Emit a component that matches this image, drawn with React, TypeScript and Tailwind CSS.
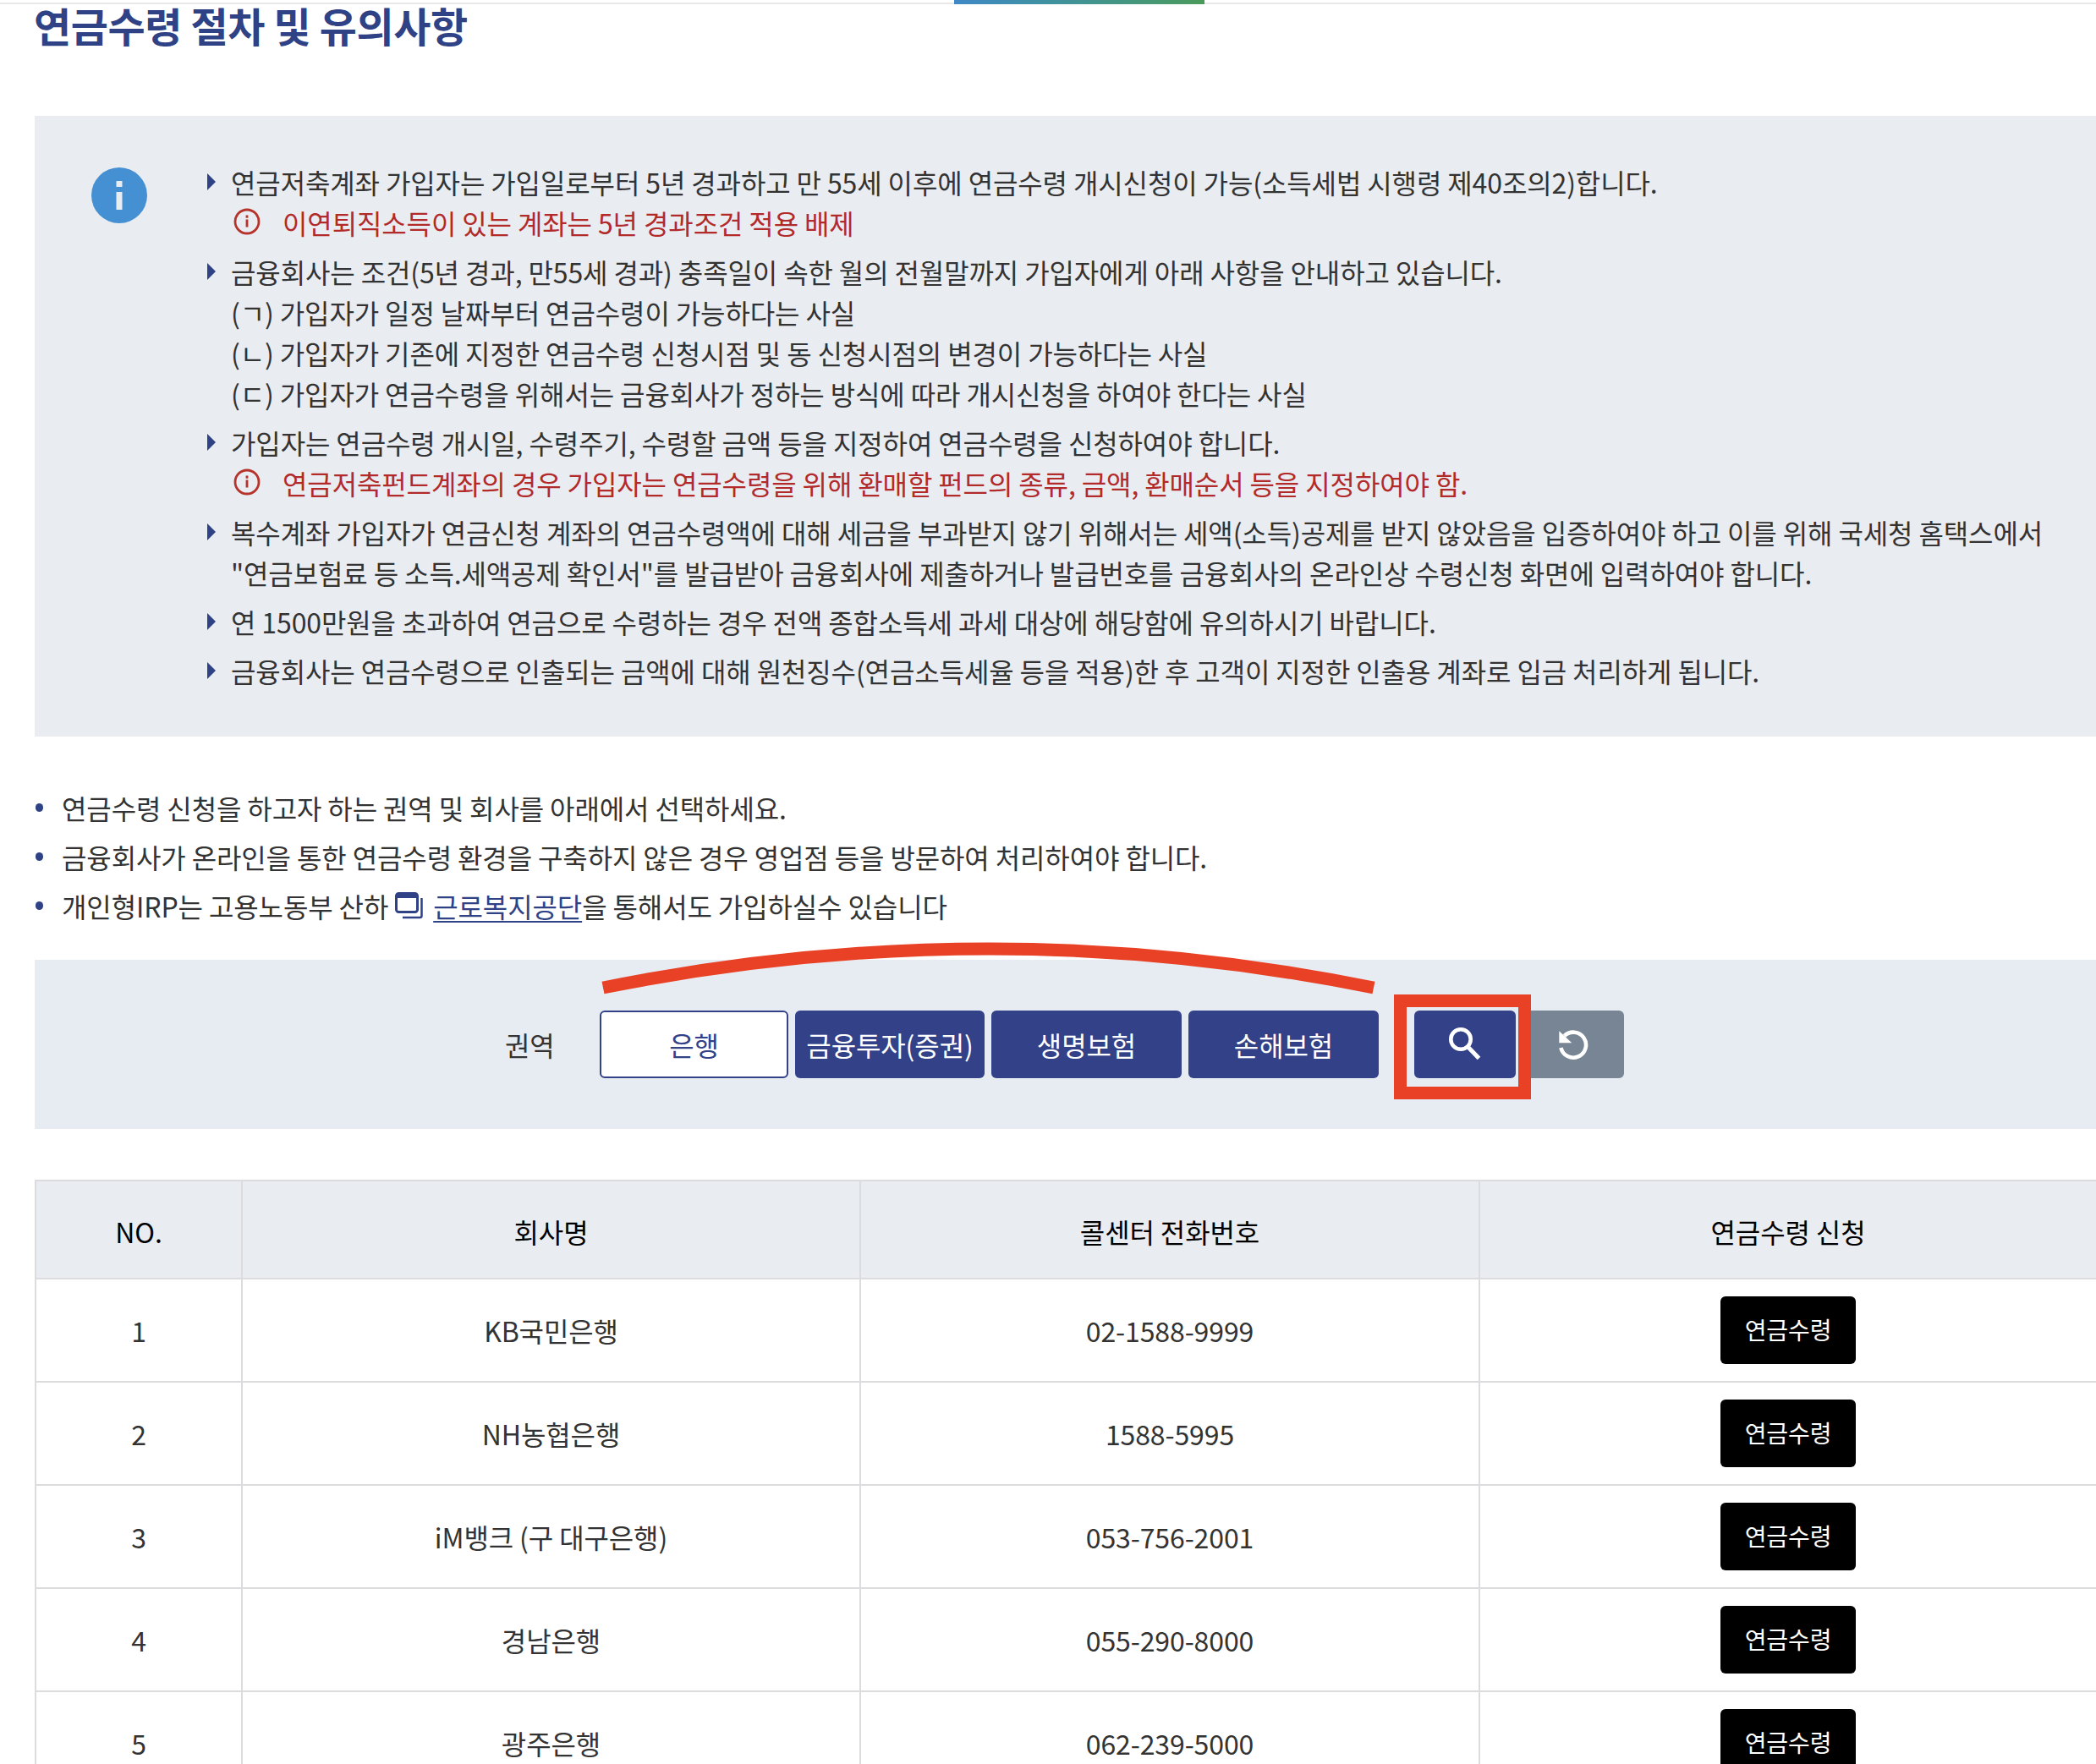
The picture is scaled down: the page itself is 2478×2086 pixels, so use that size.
const font = { fontFamily: '"Noto Sans CJK KR", "Noto Sans", sans-serif' };

const rows = [
  { no: 1, name: "KB국민은행", tel: "02-1588-9999" },
  { no: 2, name: "NH농협은행", tel: "1588-5995" },
  { no: 3, name: "iM뱅크 (구 대구은행)", tel: "053-756-2001" },
  { no: 4, name: "경남은행", tel: "055-290-8000" },
  { no: 5, name: "광주은행", tel: "062-239-5000" },
];

function Arrow() {
  return <span className="absolute left-[-28px] top-[14px] h-0 w-0 border-y-[10px] border-l-[10px] border-y-transparent border-l-[#2f4286]" />;
}

function RedNote({ children }: { children: string }) {
  return (
    <p className="flex items-center text-[#b22a2a]">
      <svg width="32" height="32" viewBox="0 0 32 32" className="-mt-[3px] ml-[3px] mr-[26px] shrink-0">
        <circle cx="16" cy="16" r="14" fill="none" stroke="#b5332b" strokeWidth="2.8" />
        <rect x="14.6" y="13.5" width="2.8" height="9" fill="#b5332b" />
        <rect x="14.6" y="8.5" width="2.8" height="3.2" fill="#b5332b" />
      </svg>
      {children}
    </p>
  );
}

export default function App() {
  return (
    <div style={font} className="relative h-[2086px] w-[2478px] overflow-hidden bg-white text-[32px] leading-[48px] tracking-[-0.12px] text-[#333]">
      {/* top tab line */}
      <div className="h-[5px] border-b-2 border-[#e8e8e8]">
        <div className="ml-[1128px] h-[5px] w-[296px] bg-gradient-to-r from-[#3f88c5] to-[#4a9a5a]" />
      </div>

      <h2 className="pl-[40px] text-[48px] leading-[48px] font-bold tracking-[-0.4px] text-[#2f4286]">연금수령 절차 및 유의사항</h2>

      {/* notice */}
      <div className="mt-[84px] ml-[41px] flex bg-[#e9ecf1] pt-[54px] pb-[54px]">
        <div className="mt-[7px] ml-[67px] flex h-[66px] w-[66px] shrink-0 items-center justify-center rounded-full bg-[#4590d2]">
          <svg width="8" height="34" viewBox="0 0 8 34">
            <rect x="0.5" y="0" width="7" height="7" fill="#e9ecf1" />
            <rect x="0.5" y="13" width="7" height="21" fill="#e9ecf1" />
          </svg>
        </div>
        <div className="ml-[99px] flex flex-col gap-[10px] whitespace-nowrap">
          <div className="relative">
            <Arrow />
            <p>연금저축계좌 가입자는 가입일로부터 5년 경과하고 만 55세 이후에 연금수령 개시신청이 가능(소득세법 시행령 제40조의2)합니다.</p>
            <RedNote>이연퇴직소득이 있는 계좌는 5년 경과조건 적용 배제</RedNote>
          </div>
          <div className="relative">
            <Arrow />
            <p>금융회사는 조건(5년 경과, 만55세 경과) 충족일이 속한 월의 전월말까지 가입자에게 아래 사항을 안내하고 있습니다.</p>
            <p>(ㄱ) 가입자가 일정 날짜부터 연금수령이 가능하다는 사실</p>
            <p>(ㄴ) 가입자가 기존에 지정한 연금수령 신청시점 및 동 신청시점의 변경이 가능하다는 사실</p>
            <p>(ㄷ) 가입자가 연금수령을 위해서는 금융회사가 정하는 방식에 따라 개시신청을 하여야 한다는 사실</p>
          </div>
          <div className="relative">
            <Arrow />
            <p>가입자는 연금수령 개시일, 수령주기, 수령할 금액 등을 지정하여 연금수령을 신청하여야 합니다.</p>
            <RedNote>연금저축펀드계좌의 경우 가입자는 연금수령을 위해 환매할 펀드의 종류, 금액, 환매순서 등을 지정하여야 함.</RedNote>
          </div>
          <div className="relative">
            <Arrow />
            <p>복수계좌 가입자가 연금신청 계좌의 연금수령액에 대해 세금을 부과받지 않기 위해서는 세액(소득)공제를 받지 않았음을 입증하여야 하고 이를 위해 국세청 홈택스에서</p>
            <p>"연금보험료 등 소득.세액공제 확인서"를 발급받아 금융회사에 제출하거나 발급번호를 금융회사의 온라인상 수령신청 화면에 입력하여야 합니다.</p>
          </div>
          <div className="relative">
            <Arrow />
            <p>연 1500만원을 초과하여 연금으로 수령하는 경우 전액 종합소득세 과세 대상에 해당함에 유의하시기 바랍니다.</p>
          </div>
          <div className="relative">
            <Arrow />
            <p>금융회사는 연금수령으로 인출되는 금액에 대해 원천징수(연금소득세율 등을 적용)한 후 고객이 지정한 인출용 계좌로 입금 처리하게 됩니다.</p>
          </div>
        </div>
      </div>

      {/* guide list */}
      <ul className="mt-[60px] flex flex-col gap-[10px] whitespace-nowrap">
        <li className="flex items-center">
          <span className="mr-[22px] ml-[42px] h-[10px] w-[9px] rounded-full bg-[#2f4286]" />
          연금수령 신청을 하고자 하는 권역 및 회사를 아래에서 선택하세요.
        </li>
        <li className="flex items-center">
          <span className="mr-[22px] ml-[42px] h-[10px] w-[9px] rounded-full bg-[#2f4286]" />
          금융회사가 온라인을 통한 연금수령 환경을 구축하지 않은 경우 영업점 등을 방문하여 처리하여야 합니다.
        </li>
        <li className="flex items-center">
          <span className="mr-[22px] ml-[42px] h-[10px] w-[9px] rounded-full bg-[#2f4286]" />
          개인형IRP는 고용노동부 산하
          <svg width="33" height="32" viewBox="0 0 33 32" className="mr-[12px] ml-[8px] shrink-0">
            <rect x="1.5" y="1.5" width="25" height="22" rx="3" fill="none" stroke="#2f4286" strokeWidth="3" />
            <path d="M1.5 4.5A3 3 0 0 1 4.5 1.5H23.5A3 3 0 0 1 26.5 4.5V7H1.5Z" fill="#2f4286" />
            <path d="M31.5 7V28A2 2 0 0 1 29.5 30H9" fill="none" stroke="#2f4286" strokeWidth="2.5" />
          </svg>
          <span className="text-[#2f4286] underline decoration-2 underline-offset-4">근로복지공단</span>을 통해서도 가입하실수 있습니다
        </li>
      </ul>

      {/* filter */}
      <div className="mt-[40px] ml-[41px] flex h-[200px] items-start bg-[#e7ecf3] pt-[60px]">
        <span className="ml-[556px] w-[112px] text-[#333] leading-[80px]">권역</span>
        <div className="flex gap-[8px]">
          <button className="h-[80px] w-[223px] rounded-[6px] border-2 border-[#324188] bg-white text-[#324188]">은행</button>
          <button className="h-[80px] w-[224px] rounded-[6px] bg-[#324188] text-white">금융투자(증권)</button>
          <button className="h-[80px] w-[225px] rounded-[6px] bg-[#324188] text-white">생명보험</button>
          <button className="h-[80px] w-[225px] rounded-[6px] bg-[#324188] text-white">손해보험</button>
        </div>
        <div className="ml-[42px] flex gap-[8px]">
          <button className="flex h-[80px] w-[120px] items-center justify-center rounded-[6px] bg-[#324188]">
            <svg width="40" height="40" viewBox="0 0 40 40">
              <circle cx="15" cy="14" r="11.7" fill="none" stroke="#fff" strokeWidth="4.6" />
              <path d="M23 22.5L36.5 36.5" fill="none" stroke="#fff" strokeWidth="5" />
            </svg>
          </button>
          <button className="flex h-[80px] w-[120px] items-center justify-center rounded-[6px] bg-[#788594]">
            <svg width="38" height="38" viewBox="0 0 38 38">
              <path d="M8.5 9A15 15 0 1 1 4.4 23" fill="none" stroke="#fff" strokeWidth="4.6" />
              <path d="M2.3 3.3V17.3H17.3Z" fill="#fff" />
            </svg>
          </button>
        </div>
      </div>

      {/* company table */}
      <table className="mt-[60px] ml-[41px] w-[2437px] table-fixed border-collapse text-center">
        <colgroup>
          <col className="w-[244px]" />
          <col className="w-[731px]" />
          <col className="w-[732px]" />
          <col className="w-[730px]" />
        </colgroup>
        <thead>
          <tr className="h-[116px] bg-[#e9ecf1] text-black">
            <th className="border-2 border-[#dcdcdf] pt-[4px] font-normal">NO.</th>
            <th className="border-2 border-[#dcdcdf] pt-[4px] font-normal">회사명</th>
            <th className="border-2 border-[#dcdcdf] pt-[4px] font-normal">콜센터 전화번호</th>
            <th className="border-2 border-[#dcdcdf] pt-[4px] font-normal">연금수령 신청</th>
          </tr>
        </thead>
        <tbody>
          {rows.map((r) => (
            <tr key={r.no} className="h-[122px]">
              <td className="border-2 border-[#dcdcdf]">{r.no}</td>
              <td className="border-2 border-[#dcdcdf]">{r.name}</td>
              <td className="border-2 border-[#dcdcdf]">{r.tel}</td>
              <td className="border-2 border-[#dcdcdf]">
                <button className="h-[80px] w-[160px] rounded-[6px] bg-black pb-[2px] align-middle text-[28px] text-white">연금수령</button>
              </td>
            </tr>
          ))}
        </tbody>
      </table>

      {/* red annotation drawn over the page */}
      <svg className="pointer-events-none absolute top-0 left-0" width="2478" height="2086">
        <path d="M713 1168Q1170 1076 1624 1168" fill="none" stroke="#e94125" strokeWidth="15" />
      </svg>
      <div className="pointer-events-none absolute top-[1176px] left-[1648px] h-[124px] w-[162px] border-[15px] border-[#e94125]" />
    </div>
  );
}
